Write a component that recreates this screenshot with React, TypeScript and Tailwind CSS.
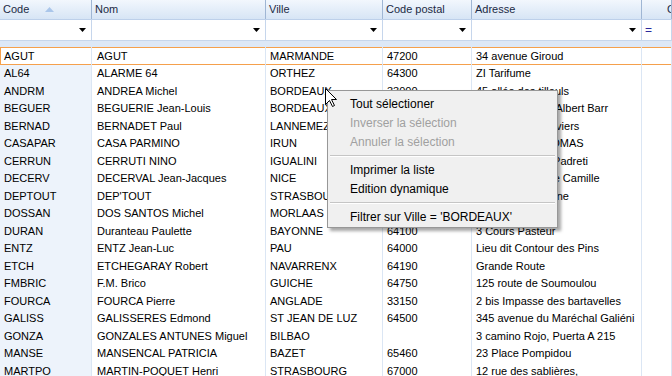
const cols = ["Code", "Nom", "Ville", "Code postal", "Adresse", "Crédit"];

const rows: string[][] = [
  ["AGUT", "AGUT", "MARMANDE", "47200", "34 avenue Giroud"],
  ["AL64", "ALARME 64", "ORTHEZ", "64300", "ZI Tarifume"],
  ["ANDRM", "ANDREA Michel", "BORDEAUX", "33000", "45 allée des tilleuls"],
  ["BEGUER", "BEGUERIE Jean-Louis", "BORDEAUX", "33000", "Rue du Docteur Albert Barr"],
  ["BERNAD", "BERNADET Paul", "LANNEMEZAN", "65300", "Chemin des Graviers"],
  ["CASAPAR", "CASA PARMINO", "IRUN", "20300", "Calle SANTO TOMAS"],
  ["CERRUN", "CERRUTI NINO", "IGUALINI", "08700", "Strada Vecchia Padreti"],
  ["DECERV", "DECERVAL Jean-Jacques", "NICE", "06000", "Boulevard Sainte Camille"],
  ["DEPTOUT", "DEP'TOUT", "STRASBOURG", "67000", "Rue de la Fontaine"],
  ["DOSSAN", "DOS SANTOS Michel", "MORLAAS", "64160", "Route de Pau"],
  ["DURAN", "Duranteau Paulette", "BAYONNE", "64100", "3 Cours Pasteur"],
  ["ENTZ", "ENTZ Jean-Luc", "PAU", "64000", "Lieu dit Contour des Pins"],
  ["ETCH", "ETCHEGARAY Robert", "NAVARRENX", "64190", "Grande Route"],
  ["FMBRIC", "F.M. Brico", "GUICHE", "64750", "125 route de Soumoulou"],
  ["FOURCA", "FOURCA Pierre", "ANGLADE", "33150", "2 bis Impasse des bartavelles"],
  ["GALISS", "GALISSERES Edmond", "ST JEAN DE LUZ", "64500", "345 avenue du Maréchal Galiéni"],
  ["GONZA", "GONZALES ANTUNES Miguel", "BILBAO", "", "3 camino Rojo, Puerta A 215"],
  ["MANSE", "MANSENCAL PATRICIA", "BAZET", "65460", "23 Place Pompidou"],
  ["MARTPO", "MARTIN-POQUET Henri", "STRASBOURG", "67000", "12 rue des sablières,"],
  ["MEJAC", "M. Henri Jacques", "BAYONNE", "64100", "Place de l'Hôtel de Ville"],
];

const grid = "grid grid-cols-[92px_174px_117px_89px_170px_30px]";

function DropArrow() {
  return (
    <svg width="7" height="4" viewBox="0 0 7 4">
      <path d="M0 0h7L3.5 4z" fill="#000" />
    </svg>
  );
}

function ContextMenu() {
  const item = "h-[19px] flex items-center pl-[22px] whitespace-nowrap";
  const sep = (
    <div className="h-[9px] flex items-center px-[2px]">
      <div className="w-full border-t border-[#c5c5c5] border-b border-b-white" />
    </div>
  );
  return (
    <div className="absolute left-[327px] top-[90px] w-[231px] h-[138px] bg-[#f0f0f0] border border-[#979797] pt-[3px] shadow-[3px_3px_3px_rgba(0,0,0,0.35)] text-[12px] text-black">
      <div className={item}>Tout sélectioner</div>
      <div className={`${item} text-[#a0a0a0]`}>Inverser la sélection</div>
      <div className={`${item} text-[#a0a0a0]`}>Annuler la sélection</div>
      {sep}
      <div className={item}>Imprimer la liste</div>
      <div className={item}>Edition dynamique</div>
      {sep}
      <div className={item}>Filtrer sur Ville = 'BORDEAUX'</div>
    </div>
  );
}

export default function App() {
  return (
    <div className="relative w-[672px] h-[376px] overflow-hidden bg-white font-['Liberation_Sans',Arial,sans-serif] text-[11px] text-black">
      {/* header */}
      <div className={`${grid} h-[20px] bg-linear-to-b from-[#f2f7fd] to-[#d7e5f5] border-b border-[#bdd0ea]`}>
        {cols.map((c, i) => (
          <div
            key={c}
            className={`flex items-center overflow-hidden whitespace-nowrap border-r border-[#9fb6d4] text-[#1b2a44] ${i === 5 ? "pl-[25px]" : "pl-[3px]"}`}
          >
            {c}
            {i === 0 && (
              <svg width="9" height="5" viewBox="0 0 9 5" className="ml-[16px]">
                <path d="M0 5h9L4.5 0z" fill="#aac6ea" />
              </svg>
            )}
          </div>
        ))}
      </div>

      {/* filter row */}
      <div className={`${grid} h-[21px] bg-white border-b border-[#c6d6ec]`}>
        {cols.map((c, i) => (
          <div key={c} className="flex items-center justify-end pr-[5px] border-r border-[#c6d6ec]">
            {i < 5 ? (
              <DropArrow />
            ) : (
              <span className="mr-auto pl-[3px] text-[12px] leading-none text-[#2a2a9c]">=</span>
            )}
          </div>
        ))}
      </div>

      {/* band */}
      <div className="h-[6px] bg-[#dde8f7]" />

      {/* body */}
      <div>
        {rows.map((r, ri) => {
          const sel = ri === 0;
          return (
            <div
              key={r[0]}
              className={`${grid} h-[17.5px] ${sel ? "shadow-[inset_0_0_0_1px_#f5a04c] bg-white" : ""}`}
            >
              {[...r, ""].map((v, ci) => (
                <div
                  key={ci}
                  className={`flex items-center overflow-hidden whitespace-nowrap border-r border-[#dbe6f4] ${ci === 1 ? "pl-[5px]" : "pl-[4px]"} ${ci === 0 && !sel ? "bg-[#edf3fb]" : ""}`}
                >
                  {v}
                </div>
              ))}
            </div>
          );
        })}
      </div>

      <ContextMenu />

      {/* mouse cursor */}
      <svg className="absolute left-[325px] top-[88px]" width="12" height="19" viewBox="0 0 12 19">
        <path
          d="M0.5 0.5V16.5L4.5 12.5L7.5 18.5L9.5 17.5L6.5 11.5H11.5Z"
          fill="#fff"
          stroke="#000"
          strokeWidth="1"
          strokeLinejoin="miter"
        />
      </svg>
    </div>
  );
}
